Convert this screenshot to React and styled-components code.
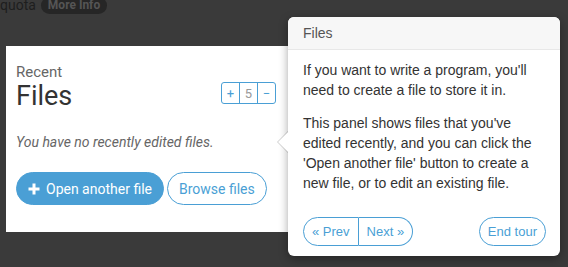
import React from "react"
import styled, { createGlobalStyle } from "styled-components"

const blue = "#4a9fd5"

const Global = createGlobalStyle`
  html, body {
    margin: 0;
    padding: 0;
    background: #3a3a3a;
    height: 100%;
    overflow: hidden;
  }
  #root {
    position: relative;
    height: 267px;
  }
`

const Page = styled.div`
  position: relative;
  height: 267px;
  font-family: Roboto, "Liberation Sans", sans-serif;
`

const QuotaBar = styled.div`
  display: flex;
  align-items: center;
  gap: 5px;
  height: 14px;
  margin-top: -2px;
  font-size: 14px;
  color: #1e1e1e;
  line-height: 14px;
`

const Badge = styled.span`
  background: #262626;
  color: #555;
  font-weight: 700;
  font-size: 12px;
  padding: 2px 7px;
  border-radius: 9px;
  line-height: 13px;
`

const Card = styled.section`
  margin: 34px 0 0 6px;
  width: 282px;
  height: 186px;
  box-sizing: border-box;
  background: #fff;
  padding: 17px 10px 0 10px;
`

const CardHead = styled.div`
  display: flex;
  justify-content: space-between;
  align-items: flex-end;
`

const Small = styled.div`
  font-size: 15px;
  color: #666;
  line-height: 18px;
`

const Big = styled.h2`
  margin: 0;
  font-weight: 400;
  font-size: 27px;
  line-height: 30px;
  color: #333;
`

const Counter = styled.div`
  display: flex;
  margin-bottom: 7px;
  margin-right: 2px;
  border: 1px solid ${blue};
  border-radius: 3px;
  height: 20px;
`

const Cell = styled.span`
  width: 17px;
  display: flex;
  align-items: center;
  justify-content: center;
  font-size: 13px;
  color: ${(p) => (p.$muted ? "#999" : blue)};
  & + & {
    border-left: 1px solid ${blue};
  }
`

const Empty = styled.p`
  margin: 21px 0 0;
  font-style: italic;
  font-size: 14px;
  color: #666;
  line-height: 20px;
`

const Actions = styled.div`
  display: flex;
  gap: 3px;
  margin-top: 20px;
`

const PillButton = styled.button`
  font-family: Roboto, sans-serif;
  font-size: 14px;
  white-space: nowrap;
  height: 33px;
  border-radius: 17px;
  border: 1px solid ${blue};
  background: ${(p) => (p.$filled ? blue : "#fff")};
  color: ${(p) => (p.$filled ? "#fff" : blue)};
  padding: 0 11px;
  display: flex;
  align-items: center;
  gap: 6px;
`

const Popover = styled.aside`
  position: absolute;
  left: 288px;
  top: 19px;
  width: 272px;
  height: 239px;
  background: #fff;
  border-radius: 6px;
  box-shadow: 0 3px 10px rgba(0, 0, 0, 0.35);
  font-family: "Liberation Sans", Arial, sans-serif;
  display: flex;
  flex-direction: column;

  &::before,
  &::after {
    content: "";
    position: absolute;
    top: 114px;
    border-style: solid;
    border-color: transparent;
  }
  &::before {
    left: -11px;
    border-width: 11px 11px 11px 0;
    border-right-color: rgba(0, 0, 0, 0.2);
  }
  &::after {
    left: -10px;
    top: 115px;
    border-width: 10px 10px 10px 0;
    border-right-color: #fff;
  }
`

const PopHead = styled.div`
  height: 33px;
  box-sizing: border-box;
  background: #f7f7f7;
  border-bottom: 1px solid #e8e8e8;
  border-radius: 6px 6px 0 0;
  padding: 0 15px;
  display: flex;
  align-items: center;
  font-size: 14px;
  color: #555;
`

const PopBody = styled.div`
  padding: 10px 15px 0;
  flex: 1;
  & p {
    margin: 0 0 13px;
    font-size: 14px;
    line-height: 20px;
    color: #333;
  }
`

const PopFoot = styled.div`
  display: flex;
  justify-content: space-between;
  padding: 0 14px 10px 15px;
`

const Group = styled.div`
  display: flex;
`

const TourButton = styled.button`
  font-family: "Liberation Sans", Arial, sans-serif;
  font-size: 13px;
  white-space: nowrap;
  height: 29px;
  padding: 0 ${(p) => p.$pad || 11}px;
  border: 1px solid ${blue};
  background: #fff;
  color: ${blue};
  border-radius: ${(p) => p.$radius || "15px"};
  & + & {
    border-left: none;
  }
`

const Plus = () => (
  <svg width="12" height="12" viewBox="0 0 12 12">
    <path d="M6 0.5v11M0.5 6h11" stroke="#fff" strokeWidth="3" />
  </svg>
)

export default function App() {
  return (
    <Page>
      <Global />
      <QuotaBar>
        <span>quota</span>
        <Badge>More Info</Badge>
      </QuotaBar>
      <Card>
        <CardHead>
          <div>
            <Small>Recent</Small>
            <Big>Files</Big>
          </div>
          <Counter>
            <Cell>+</Cell>
            <Cell $muted>5</Cell>
            <Cell>−</Cell>
          </Counter>
        </CardHead>
        <Empty>You have no recently edited files.</Empty>
        <Actions>
          <PillButton $filled>
            <Plus />
            Open another file
          </PillButton>
          <PillButton>Browse files</PillButton>
        </Actions>
      </Card>
      <Popover>
        <PopHead>Files</PopHead>
        <PopBody>
          <p>If you want to write a program, you'll need to create a file to store it in.</p>
          <p>
            This panel shows files that you've edited recently, and you can click the 'Open
            another file' button to create a new file, or to edit an existing file.
          </p>
        </PopBody>
        <PopFoot>
          <Group>
            <TourButton $radius="15px 0 0 15px" $pad={8}>« Prev</TourButton>
            <TourButton $radius="0 15px 15px 0" $pad={8}>Next »</TourButton>
          </Group>
          <TourButton $pad={8}>End tour</TourButton>
        </PopFoot>
      </Popover>
    </Page>
  )
}
